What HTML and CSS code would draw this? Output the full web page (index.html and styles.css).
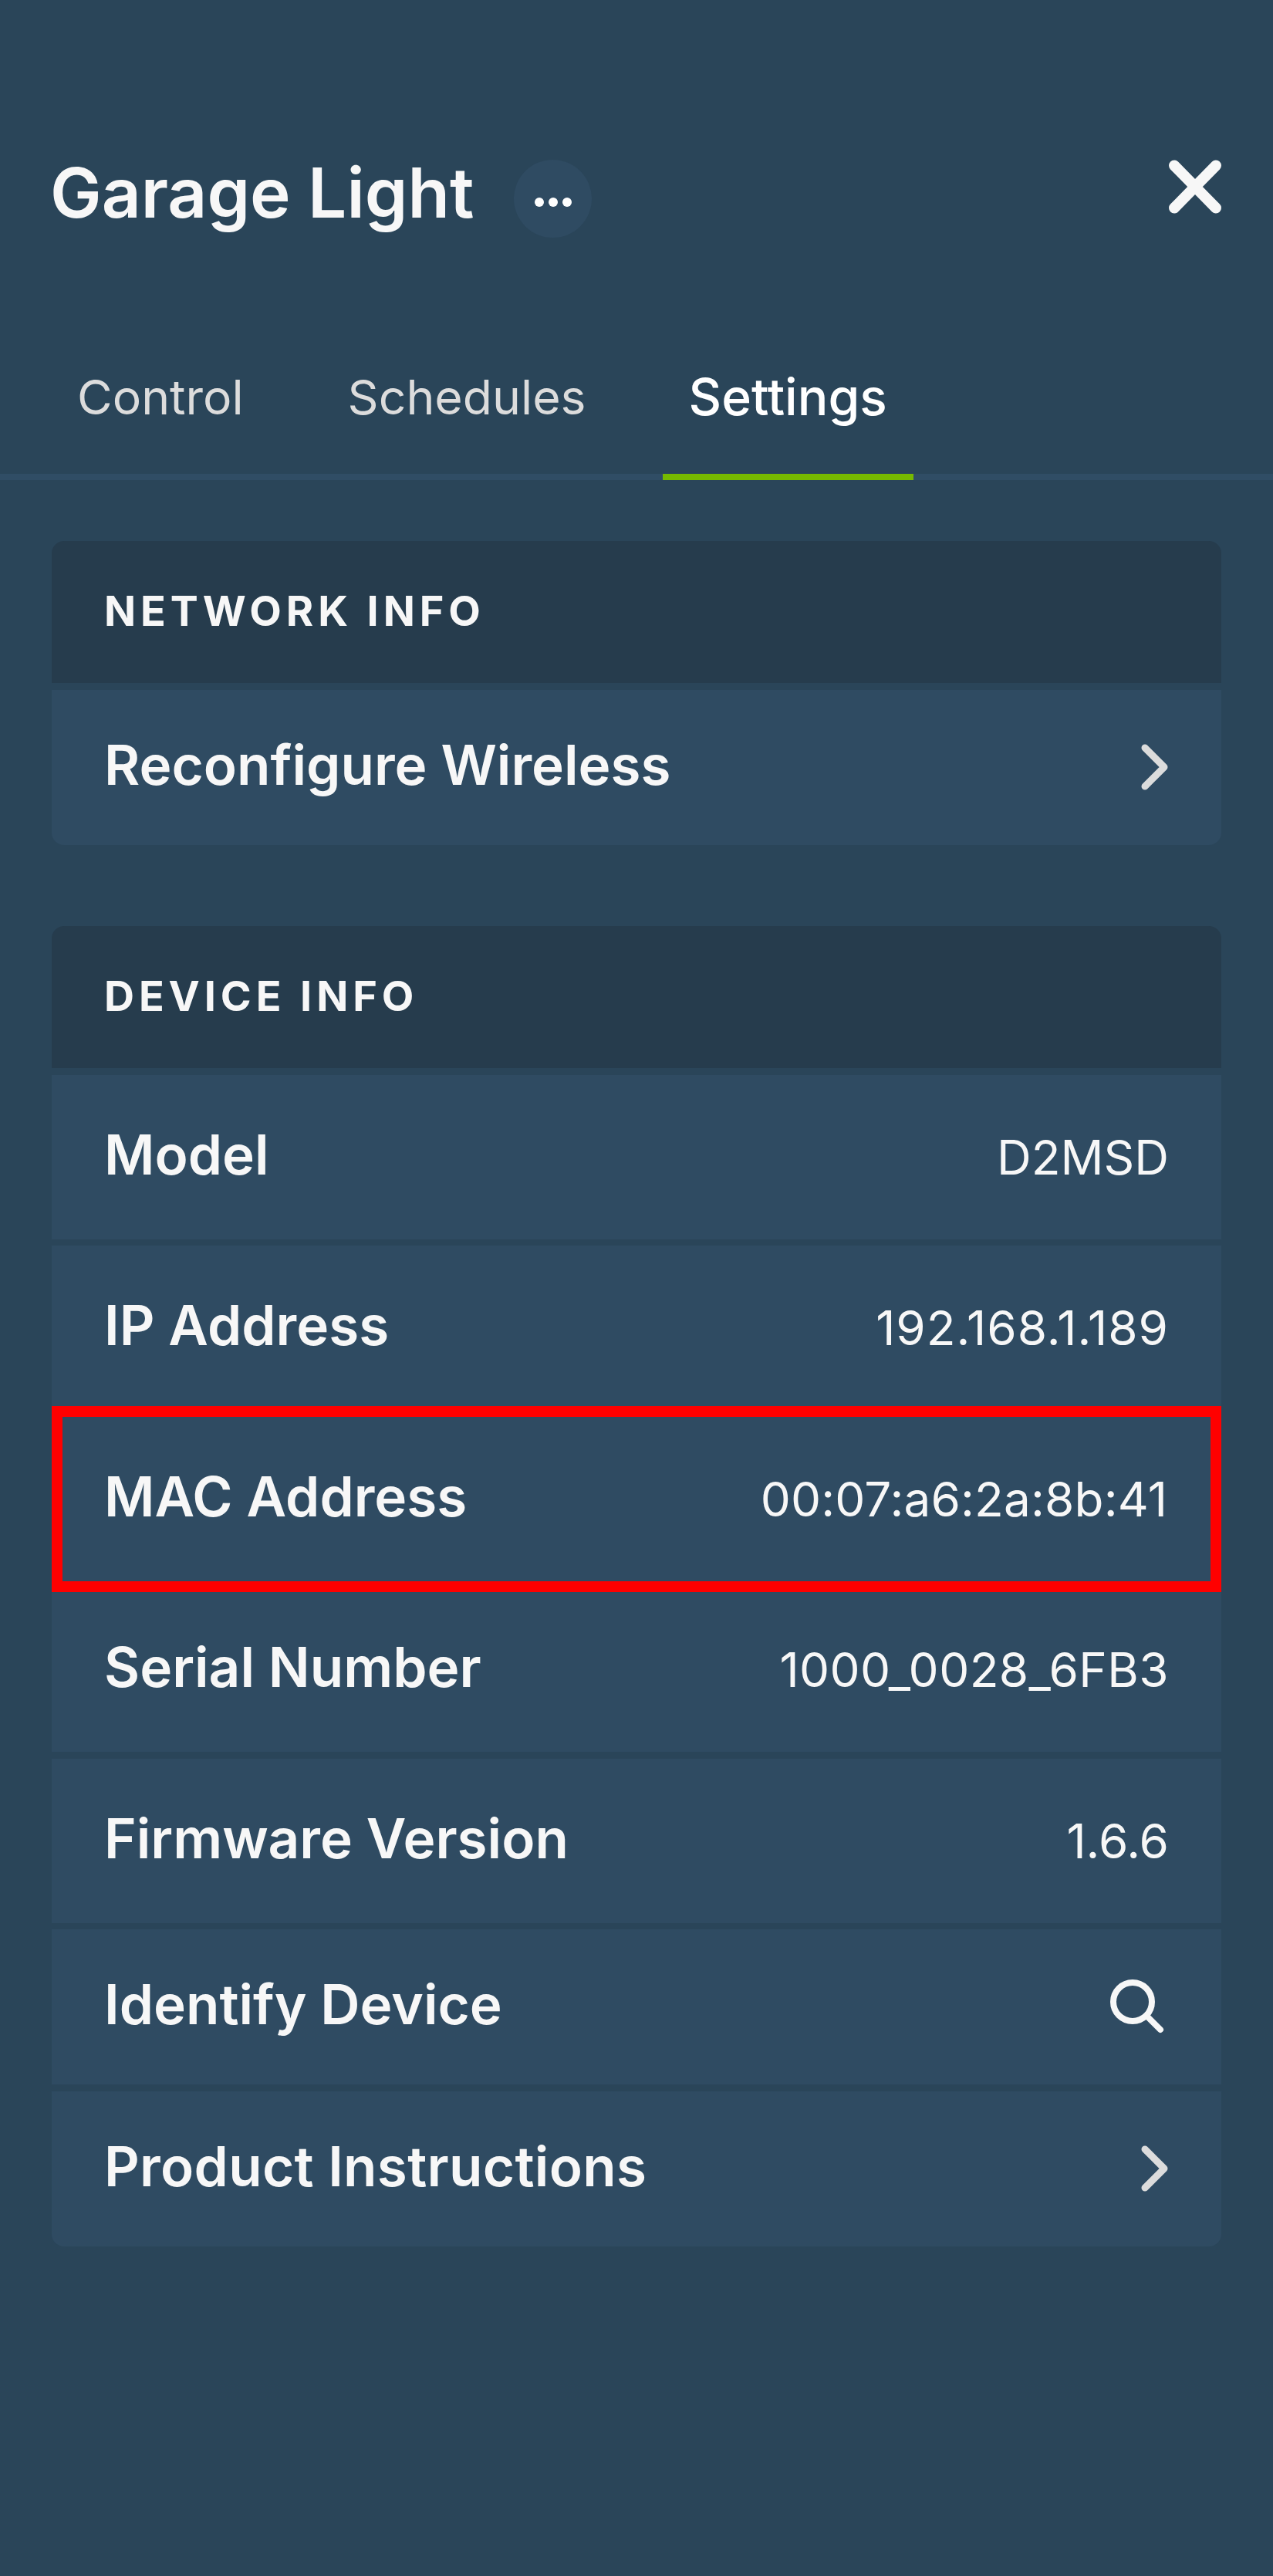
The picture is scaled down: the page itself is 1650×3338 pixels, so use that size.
FILE: index.html
```html
<!DOCTYPE html>
<html lang="en">
<head>
<meta charset="utf-8">
<title>Garage Light</title>
<link rel="stylesheet" href="styles.css">
</head>
<body>
<main class="panel">
  <header class="topbar">
    <div class="title-group">
      <h1 class="title">Garage Light</h1>
      <button class="more" aria-label="More">
        <svg class="more-icon" viewBox="0 0 48 12"><circle cx="6" cy="6" r="6"/><circle cx="24" cy="6" r="6"/><circle cx="42" cy="6" r="6"/></svg>
      </button>
    </div>
    <svg class="close" viewBox="0 0 68 70"><path d="M7 7.5 61 62.5M61 7.5 7 62.5"/></svg>
  </header>
  <nav class="tabs">
    <a class="tab">Control</a>
    <a class="tab">Schedules</a>
    <a class="tab active">Settings</a>
  </nav>
  <section class="card card-network">
    <h2 class="card-head">NETWORK INFO</h2>
    <div class="row row-network"><span class="label">Reconfigure Wireless</span>
      <svg class="chevron" viewBox="0 0 36 60"><path d="M5 5 30 30 5 55"/></svg></div>
  </section>
  <section class="card card-device">
    <h2 class="card-head">DEVICE INFO</h2>
    <div class="row"><span class="label">Model</span><span class="value">D2MSD</span></div>
    <div class="row"><span class="label">IP Address</span><span class="value value-ip">192.168.1.189</span></div>
    <div class="row highlighted"><span class="label">MAC Address</span><span class="value value-mac">00:07:a6:2a:8b:41</span></div>
    <div class="row"><span class="label">Serial Number</span><span class="value value-serial">1000_0028_6FB3</span></div>
    <div class="row"><span class="label">Firmware Version</span><span class="value">1.6.6</span></div>
    <div class="row row-short"><span class="label">Identify Device</span>
      <svg class="search" viewBox="0 0 70 70"><circle cx="29" cy="29" r="25"/><path d="M49 49 65 65"/></svg></div>
    <div class="row row-short"><span class="label label-wide">Product Instructions</span>
      <svg class="chevron" viewBox="0 0 36 60"><path d="M5 5 30 30 5 55"/></svg></div>
  </section>
</main>
</body>
</html>
```
FILE: styles.css
```css
* { box-sizing: border-box; }
html, body { margin: 0; padding: 0; }
body {
  background: #2a4559;
  font-family: Inter, "Noto Sans", sans-serif;
  color: #f7f7f7;
  min-height: 3338px;
}
.panel { width: 1650px; padding: 0 67px; }
.topbar {
  display: flex;
  justify-content: space-between;
  align-items: flex-start;
  height: 410px;
  padding-top: 207px;
}
.title-group { display: flex; align-items: flex-start; gap: 52px; margin-left: -2px; }
.title { margin: 0; font-size: 89px; font-weight: 600; line-height: 85px; }
.more {
  width: 101px; height: 101px; padding: 0; border: 0; border-radius: 50%;
  background: #2f4b62;
  display: flex; align-items: center; justify-content: center;
}
.more-icon { width: 48px; height: 12px; fill: #fff; margin-top: 8px; }
.close {
  width: 68px; height: 70px; fill: none; stroke: #f7f7f7; stroke-width: 14; stroke-linecap: round;
}
.tabs {
  display: flex;
  gap: 63px;
  height: 212px;
  margin: 0 -67px;
  padding: 0 0 0 64px;
  border-bottom: 8px solid #304d65;
}
.tab {
  display: flex; align-items: center;
  height: 212px;
  padding: 4px 36px 0;
  font-size: 62.5px;
  color: #dcdcdc;
  border-bottom: 8px solid transparent;
}
.tab.active { padding: 4px 34px 0; color: #fff; font-size: 66px; font-weight: 500; border-bottom-color: #76b900; }
.card { border-radius: 16px; position: relative; }
.card-network { margin-top: 79px; }
.card-device { margin-top: 105px; }
.card-head {
  margin: 0;
  height: 184px;
  padding: 0 68px 3px;
  display: flex; align-items: center;
  background: #263c4d;
  border-radius: 16px 16px 0 0;
  font-size: 54px;
  font-weight: 700;
  letter-spacing: 5.9px;
  color: #f7f7f7;
}
.row {
  display: flex; align-items: center; justify-content: space-between;
  height: 213px;
  margin-top: 8.5px;
  padding: 0 68px;
  background: #2f4b62;
}
.row:last-child { border-radius: 0 0 16px 16px; }
.row-short { height: 201px; }
.row-network { height: 201.5px; }
.label { margin-bottom: 7px; font-size: 71px; font-weight: 600; color: #f7f7f7; }
.label-wide { letter-spacing: 0.3px; }
.value { font-size: 62px; font-weight: 400; color: #f7f7f7; }
.value-ip { letter-spacing: 1px; }
.value-mac { letter-spacing: 0.15px; margin-right: 2px; }
.value-serial { letter-spacing: 0.4px; }
.highlighted { position: relative; }
.highlighted::after {
  content: "";
  position: absolute;
  left: 0; right: 0; top: -14px; bottom: -14px;
  border: 14px solid #ff0000;
}
.chevron { width: 36px; height: 60px; fill: none; stroke: #dcdcdc; stroke-width: 9; stroke-linecap: round; stroke-linejoin: round; }
.search { width: 70px; height: 70px; margin-right: 6px; margin-bottom: 2px; fill: none; stroke: #f7f7f7; stroke-width: 8; stroke-linecap: round; }
```
